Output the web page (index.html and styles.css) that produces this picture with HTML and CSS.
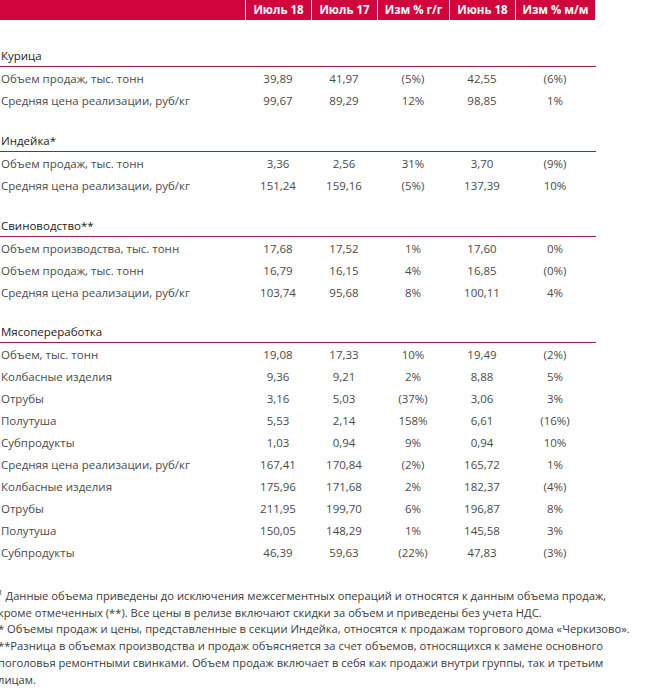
FILE: index.html
```html
<!DOCTYPE html>
<html lang="ru">
<head>
<meta charset="utf-8">
<title>Операционные результаты</title>
<link rel="stylesheet" href="styles.css">
</head>
<body>
<div class="report">
  <div class="row head">
    <div class="hc"></div>
    <div class="hc">Июль 18</div>
    <div class="hc">Июль 17</div>
    <div class="hc">Изм % г/г</div>
    <div class="hc">Июнь 18</div>
    <div class="hc">Изм % м/м</div>
  </div>

  <section class="block first">
    <div class="title">Курица</div>
    <div class="row"><span class="label">Объем продаж, тыс. тонн</span><span>39,89</span><span>41,97</span><span>(5%)</span><span>42,55</span><span>(6%)</span></div>
    <div class="row"><span class="label">Средняя цена реализации, руб/кг</span><span>99,67</span><span>89,29</span><span>12%</span><span>98,85</span><span>1%</span></div>
  </section>

  <section class="block">
    <div class="title">Индейка*</div>
    <div class="row"><span class="label">Объем продаж, тыс. тонн</span><span>3,36</span><span>2,56</span><span>31%</span><span>3,70</span><span>(9%)</span></div>
    <div class="row"><span class="label">Средняя цена реализации, руб/кг</span><span>151,24</span><span>159,16</span><span>(5%)</span><span>137,39</span><span>10%</span></div>
  </section>

  <section class="block">
    <div class="title">Свиноводство**</div>
    <div class="row"><span class="label">Объем производства, тыс. тонн</span><span>17,68</span><span>17,52</span><span>1%</span><span>17,60</span><span>0%</span></div>
    <div class="row"><span class="label">Объем продаж, тыс. тонн</span><span>16,79</span><span>16,15</span><span>4%</span><span>16,85</span><span>(0%)</span></div>
    <div class="row"><span class="label">Средняя цена реализации, руб/кг</span><span>103,74</span><span>95,68</span><span>8%</span><span>100,11</span><span>4%</span></div>
  </section>

  <section class="block last">
    <div class="title">Мясопереработка</div>
    <div class="row"><span class="label">Объем, тыс. тонн</span><span>19,08</span><span>17,33</span><span>10%</span><span>19,49</span><span>(2%)</span></div>
    <div class="row"><span class="label">Колбасные изделия</span><span>9,36</span><span>9,21</span><span>2%</span><span>8,88</span><span>5%</span></div>
    <div class="row"><span class="label">Отрубы</span><span>3,16</span><span>5,03</span><span>(37%)</span><span>3,06</span><span>3%</span></div>
    <div class="row"><span class="label">Полутуша</span><span>5,53</span><span>2,14</span><span>158%</span><span>6,61</span><span>(16%)</span></div>
    <div class="row"><span class="label">Субпродукты</span><span>1,03</span><span>0,94</span><span>9%</span><span>0,94</span><span>10%</span></div>
    <div class="row"><span class="label">Средняя цена реализации, руб/кг</span><span>167,41</span><span>170,84</span><span>(2%)</span><span>165,72</span><span>1%</span></div>
    <div class="row"><span class="label">Колбасные изделия</span><span>175,96</span><span>171,68</span><span>2%</span><span>182,37</span><span>(4%)</span></div>
    <div class="row"><span class="label">Отрубы</span><span>211,95</span><span>199,70</span><span>6%</span><span>196,87</span><span>8%</span></div>
    <div class="row"><span class="label">Полутуша</span><span>150,05</span><span>148,29</span><span>1%</span><span>145,58</span><span>3%</span></div>
    <div class="row"><span class="label">Субпродукты</span><span>46,39</span><span>59,63</span><span>(22%)</span><span>47,83</span><span>(3%)</span></div>
  </section>

  <div class="notes">
    <p><sup>1</sup> Данные объема приведены до исключения межсегментных операций и относятся к данным объема продаж,<br>кроме отмеченных (**). Все цены в релизе включают скидки за объем и приведены без учета НДС.</p>
    <p>* Объемы продаж и цены, представленные в секции Индейка, относятся к продажам торгового дома «Черкизово».</p>
    <p>**Разница в объемах производства и продаж объясняется за счет объемов, относящихся к замене основного<br>поголовья ремонтными свинками. Объем продаж включает в себя как продажи внутри группы, так и третьим<br>лицам.</p>
  </div>
</div>
</body>
</html>
```

FILE: styles.css
```css
* { box-sizing: border-box; }

html, body {
  margin: 0;
  padding: 0;
  background: #ffffff;
}

body {
  font-family: "Open Sans", "Liberation Sans", sans-serif;
  font-size: 11.5px;
  color: #4a4a4a;
}

.report {
  width: 596px;
}

.row {
  display: grid;
  grid-template-columns: 245px 66px 66px 72px 66px 80px;
  height: 22px;
  align-items: center;
}

.row > span {
  text-align: center;
  white-space: nowrap;
}

.row > .label {
  text-align: left;
  padding-left: 1px;
}

.head {
  height: 20px;
  width: 595px;
}

.hc {
  height: 20px;
  line-height: 20px;
  background: #d2043c;
  color: #ffffff;
  font-weight: 700;
  font-size: 11.5px;
  text-align: center;
  white-space: nowrap;
}

.hc + .hc {
  border-left: 1px solid #ffffff;
}

.block {
  padding-top: 18px;
}

.block.first {
  padding-top: 24px;
}

.block.last {
  padding-top: 17px;
}

.title {
  height: 23px;
  line-height: 20px;
  padding-top: 2px;
  padding-left: 1px;
  color: #222222;
  border-bottom: 1px solid #9c1e4a;
}

.notes {
  margin-top: 25px;
  margin-left: -2px;
  font-size: 11.2px;
  line-height: 16.7px;
  color: #3a3a3a;
}

.notes p {
  margin: 0;
  white-space: nowrap;
}

.notes sup {
  font-size: 8px;
  line-height: 0;
  vertical-align: 5px;
}
```
